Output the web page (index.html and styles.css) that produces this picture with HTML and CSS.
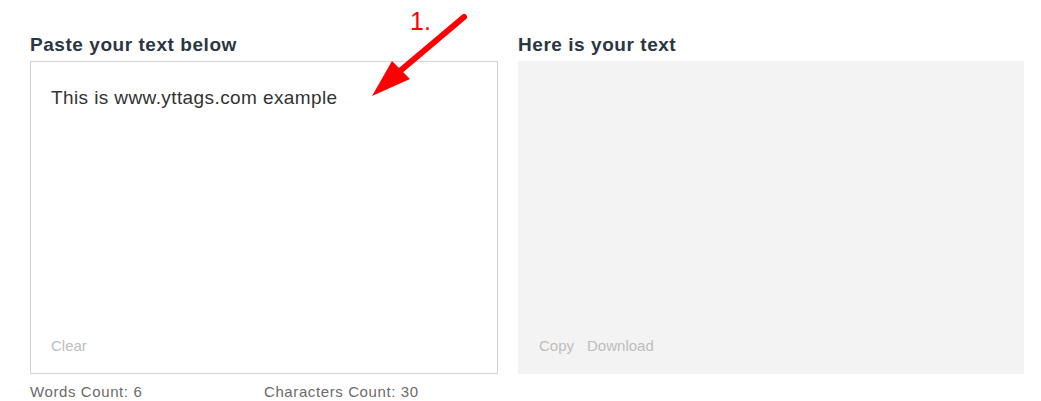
FILE: index.html
```html
<!DOCTYPE html>
<html lang="en">
<head>
  <meta charset="UTF-8" />
  <title>Text Tool</title>
  <link rel="stylesheet" href="styles.css">
</head>
<body>
  <div class="tool">
    <div class="col col-in">
      <h2>Paste your text below</h2>
      <div class="box box-in">
        <div class="box-text">This is www.yttags.com example</div>
        <div class="actions">
          <span class="act">Clear</span>
        </div>
      </div>
      <div class="counts">
        <span class="count">Words Count: 6</span>
        <span class="count">Characters Count: 30</span>
      </div>
    </div>
    <div class="col col-out">
      <h2>Here is your text</h2>
      <div class="box box-out">
        <div class="box-text"></div>
        <div class="actions">
          <span class="act">Copy</span>
          <span class="act">Download</span>
        </div>
      </div>
    </div>
  </div>

  <div class="note">
    <span class="note-num">1.</span>
    <svg class="note-arrow" width="1041" height="120" viewBox="0 0 1041 120">
      <line x1="464" y1="17" x2="400" y2="71" stroke="#ff0000" stroke-width="6" stroke-linecap="round"/>
      <polygon points="372,96 392,61 410,79" fill="#ff0000"/>
    </svg>
  </div>
</body>
</html>
```

FILE: styles.css
```css
html, body {
  margin: 0;
  padding: 0;
  background: white;
}
body {
  font-family: 'Liberation Sans', Arial, sans-serif;
  color: #333;
}
.tool {
  display: flex;
  gap: 20px;
  padding: 34px 17px 0 30px;
}
.col-in {
  width: 468px;
}
.col-out {
  width: 506px;
}
h2 {
  font-size: 19px;
  line-height: 22px;
  font-weight: bold;
  letter-spacing: 0.55px;
  color: #2b3643;
  margin: 0 0 5px;
}
.box {
  height: 313px;
  box-sizing: border-box;
  display: flex;
  flex-direction: column;
  padding: 22px 20px 17px;
}
.box-in {
  border: 1px solid #d2d2d2;
}
.box-out {
  background: #f3f3f3;
  padding: 23px 21px 18px;
}
.box-text {
  flex: 1;
  font-size: 19px;
  line-height: 27px;
  letter-spacing: 0.4px;
  color: #333;
}
.actions {
  display: flex;
  gap: 13px;
}
.act {
  font-size: 15px;
  line-height: 20px;
  color: #bdbdbd;
}
.counts {
  display: flex;
  margin-top: 8px;
}
.count {
  flex: 1;
  font-size: 15px;
  line-height: 20px;
  letter-spacing: 0.6px;
  color: #6b6b6b;
}
.note {
  position: absolute;
  left: 0;
  top: 0;
}
.note-arrow {
  display: block;
}
.note-num {
  position: absolute;
  left: 410px;
  top: 6px;
  font-size: 25px;
  line-height: 30px;
  color: #ff0000;
}
```
